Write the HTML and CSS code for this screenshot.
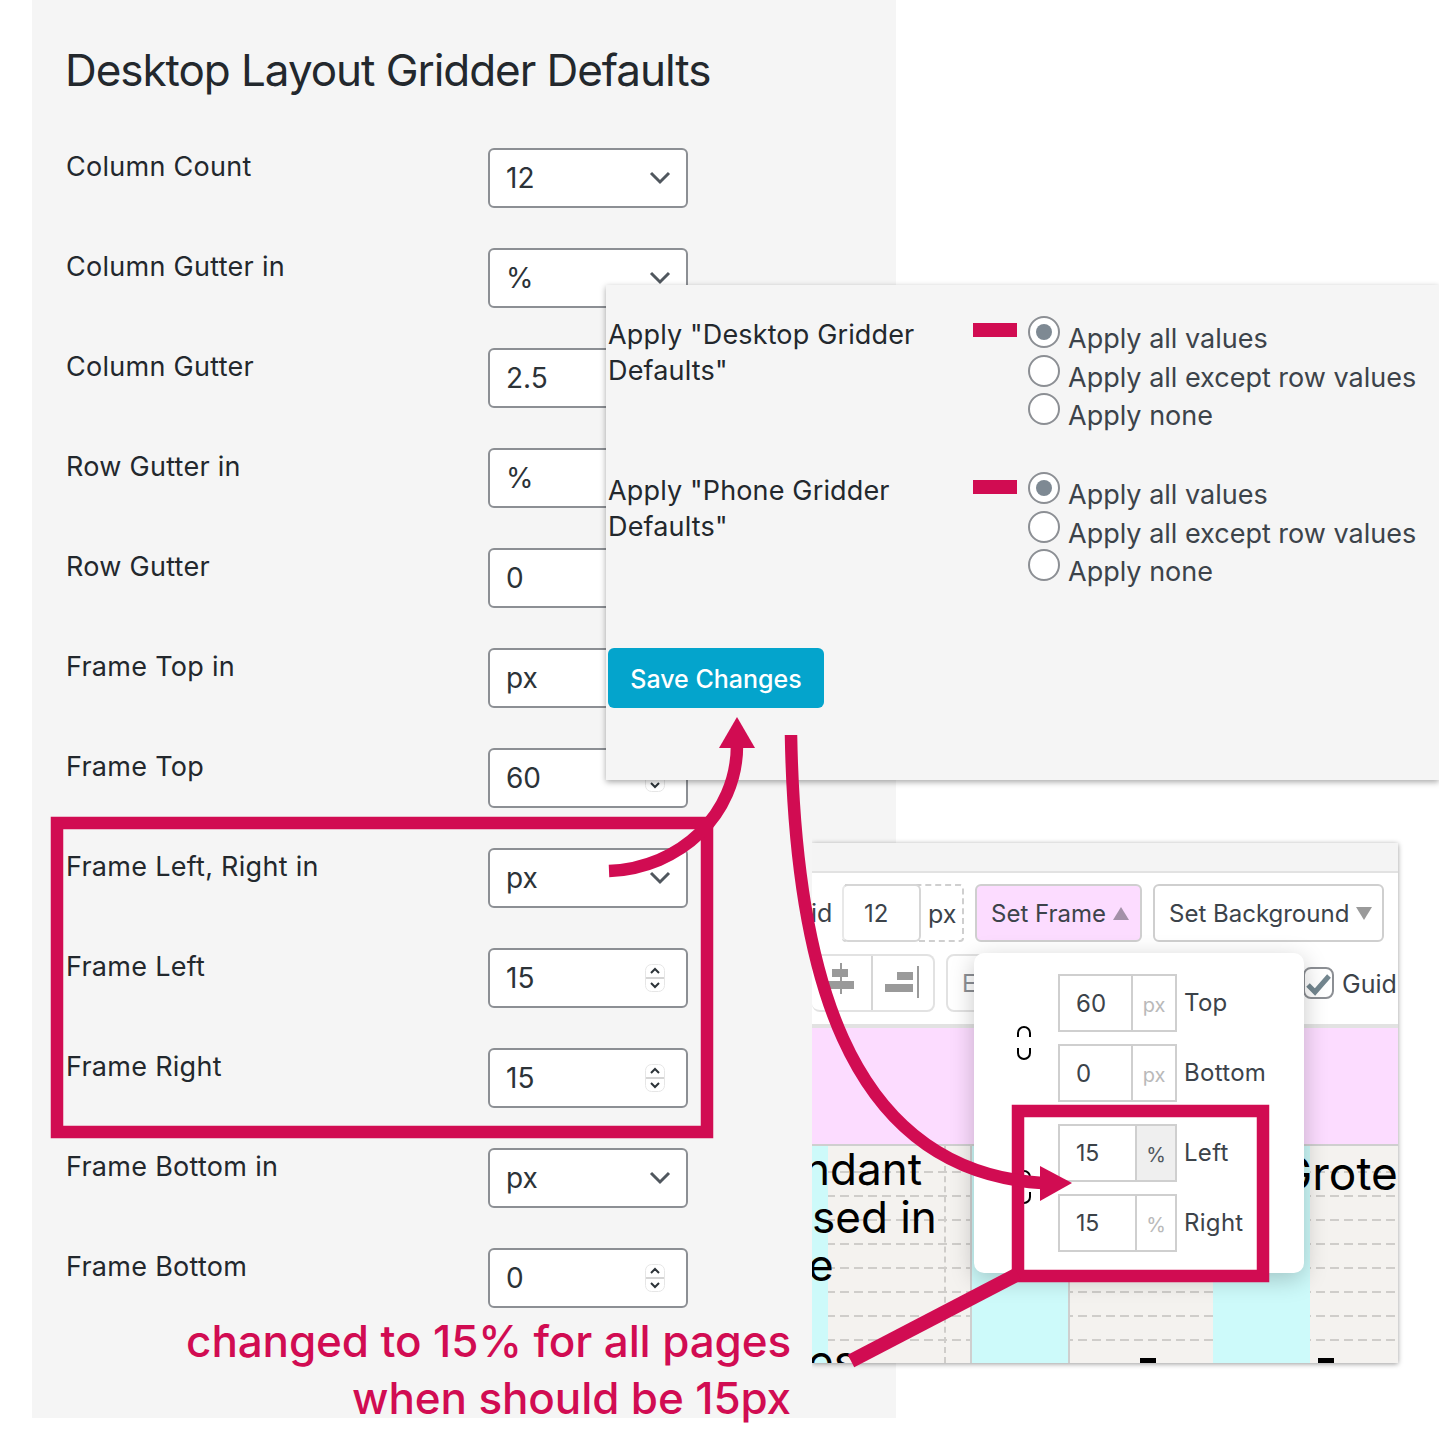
FILE: index.html
```html
<!DOCTYPE html>
<html lang="en">
<head>
<meta charset="utf-8">
<title>Desktop Layout Gridder Defaults</title>
<link rel="stylesheet" href="styles.css">
</head>
<body>
<main class="stage">
  <section class="gridder">
    <h1 class="gridder-title">Desktop Layout Gridder Defaults</h1>
    <div class="row"><span class="row-label">Column Count</span><div class="field"><span>12</span><svg class="chev" viewBox="0 0 22 14"><path d="M2 2l9 9 9-9"/></svg></div></div>
    <div class="row"><span class="row-label">Column Gutter in</span><div class="field"><span>%</span><svg class="chev" viewBox="0 0 22 14"><path d="M2 2l9 9 9-9"/></svg></div></div>
    <div class="row"><span class="row-label">Column Gutter</span><div class="field"><span>2.5</span></div></div>
    <div class="row"><span class="row-label">Row Gutter in</span><div class="field"><span>%</span></div></div>
    <div class="row"><span class="row-label">Row Gutter</span><div class="field"><span>0</span></div></div>
    <div class="row"><span class="row-label">Frame Top in</span><div class="field"><span>px</span></div></div>
    <div class="row"><span class="row-label">Frame Top</span><div class="field"><span>60</span><svg class="spin" viewBox="0 0 20 28"><rect x=".5" y=".5" width="19" height="27" rx="6"/><path class="spin-line" d="M1 14h18"/><path d="M6 9l4-4 4 4M6 19l4 4 4-4"/></svg></div></div>
    <div class="row"><span class="row-label">Frame Left, Right in</span><div class="field"><span>px</span><svg class="chev" viewBox="0 0 22 14"><path d="M2 2l9 9 9-9"/></svg></div></div>
    <div class="row"><span class="row-label">Frame Left</span><div class="field"><span>15</span><svg class="spin" viewBox="0 0 20 28"><rect x=".5" y=".5" width="19" height="27" rx="6"/><path class="spin-line" d="M1 14h18"/><path d="M6 9l4-4 4 4M6 19l4 4 4-4"/></svg></div></div>
    <div class="row"><span class="row-label">Frame Right</span><div class="field"><span>15</span><svg class="spin" viewBox="0 0 20 28"><rect x=".5" y=".5" width="19" height="27" rx="6"/><path class="spin-line" d="M1 14h18"/><path d="M6 9l4-4 4 4M6 19l4 4 4-4"/></svg></div></div>
    <div class="row"><span class="row-label">Frame Bottom in</span><div class="field"><span>px</span><svg class="chev" viewBox="0 0 22 14"><path d="M2 2l9 9 9-9"/></svg></div></div>
    <div class="row"><span class="row-label">Frame Bottom</span><div class="field"><span>0</span><svg class="spin" viewBox="0 0 20 28"><rect x=".5" y=".5" width="19" height="27" rx="6"/><path class="spin-line" d="M1 14h18"/><path d="M6 9l4-4 4 4M6 19l4 4 4-4"/></svg></div></div>
  </section>

  <section class="apply-panel">
    <div class="apply-group">
      <div class="apply-label">Apply "Desktop Gridder Defaults"</div>
      <div class="apply-dash"></div>
      <div class="apply-options">
        <div class="option"><span class="radio radio-on"></span><span class="option-text">Apply all values</span></div>
        <div class="option"><span class="radio"></span><span class="option-text">Apply all except row values</span></div>
        <div class="option"><span class="radio"></span><span class="option-text">Apply none</span></div>
      </div>
    </div>
    <div class="apply-group">
      <div class="apply-label">Apply "Phone Gridder Defaults"</div>
      <div class="apply-dash"></div>
      <div class="apply-options">
        <div class="option"><span class="radio radio-on"></span><span class="option-text">Apply all values</span></div>
        <div class="option"><span class="radio"></span><span class="option-text">Apply all except row values</span></div>
        <div class="option"><span class="radio"></span><span class="option-text">Apply none</span></div>
      </div>
    </div>
    <div class="save-button">Save Changes</div>
  </section>

  <section class="frame-shot">
    <div class="shot-topbar"></div>
    <div class="shot-tools">
      <div class="tool-row">
        <span class="tool-id">id</span>
        <div class="grid-size"><span class="grid-num">12</span><span class="grid-unit">px</span></div>
        <div class="tool-btn tool-btn-on">Set Frame<span class="tri tri-up"></span></div>
        <div class="tool-btn tool-btn-wide">Set Background<span class="tri tri-down"></span></div>
      </div>
      <div class="tool-row tool-row-two">
        <div class="align-group">
          <span class="align-cell align-cell-a"><svg viewBox="0 0 30 32" class="align-icon align-icon-a"><path d="M15 0v31" class="align-axis"/><rect x="6" y="6" width="16" height="8"/><rect x="0" y="18" width="28" height="8"/></svg></span>
          <span class="align-cell"><svg viewBox="0 0 35 34" class="align-icon align-icon-b"><path d="M33 0v32" class="align-axis"/><rect x="12" y="6" width="16" height="8"/><rect x="0" y="18" width="28" height="8"/></svg></span>
        </div>
        <div class="e-button">E</div>
        <div class="guide-toggle"><span class="guide-check"><svg viewBox="0 0 27 28"><path d="M3 16l7 7L24 7"/></svg></span><span>Guid</span></div>
      </div>
    </div>
    <div class="shot-pink"></div>
    <div class="shot-grid">
      <div class="grid-col col-a">
        <span class="col-line col-line-n">ndant</span>
        <span class="col-line">sed in</span>
        <span class="col-line col-line-e">e</span>
        <span class="col-line col-line-blank">&nbsp;</span>
        <span class="col-line col-line-e">es</span>
      </div>
      <div class="grid-col col-b"></div>
      <div class="grid-col col-c"><span class="mark"></span></div>
      <div class="grid-col col-d"></div>
      <div class="grid-col col-e"><span class="grotes">Grotes</span><span class="mark mark-e"></span></div>
    </div>

    <div class="frame-pop">
      <svg class="chain" viewBox="0 0 16 34"><path d="M2 11V7a6 6 0 0 1 12 0v4M2 22v5a6 6 0 0 0 12 0v-5"/></svg>
      <svg class="chain chain-two" viewBox="0 0 16 34"><path d="M2 11V7a6 6 0 0 1 12 0v4M2 22v5a6 6 0 0 0 12 0v-5"/></svg>
      <div class="pop-list">
        <div class="pop-row"><div class="pop-box"><span class="pop-num">60</span><span class="pop-unit">px</span></div><span class="pop-label">Top</span></div>
        <div class="pop-row"><div class="pop-box"><span class="pop-num">0</span><span class="pop-unit">px</span></div><span class="pop-label">Bottom</span></div>
        <div class="pop-row pop-row-gap"><div class="pop-box"><span class="pop-num pop-num-wide">15</span><span class="pop-unit pop-unit-on">%</span></div><span class="pop-label">Left</span></div>
        <div class="pop-row"><div class="pop-box"><span class="pop-num pop-num-wide">15</span><span class="pop-unit pop-unit-small">%</span></div><span class="pop-label">Right</span></div>
      </div>
    </div>
  </section>

  <svg class="marks" viewBox="0 0 1439 1429" aria-hidden="true">
    <rect x="57" y="823" width="650" height="309"/>
    <rect x="1018" y="1111" width="245" height="165"/>
    <path d="M609 871C680 868 737 815 737 745"/>
    <path d="M791 735C795 960 842 1170 1042 1183"/>
    <path class="mark-thick" d="M1018 1274L851 1361"/>
    <polygon points="737,717 719,748 755,748"/>
    <polygon points="1072,1183 1040,1166 1040,1201"/>
  </svg>

  <p class="note">changed to 15% for all pages<br>when should be 15px</p>
</main>
</body>
</html>
```

FILE: styles.css
```css
* { box-sizing: border-box; }
html, body { margin: 0; padding: 0; background: #fff; }
body { font-family: Inter, "Liberation Sans", sans-serif; color: #23282d; }

.stage { position: relative; width: 1439px; height: 1429px; overflow: hidden; }

/* left settings panel */
.gridder {
  width: 864px; height: 1418px; margin-left: 32px;
  padding: 0 0 0 34px; background: #f5f5f5;
}
.gridder-title {
  margin: 0 0 0 -1px; height: 148px; padding-top: 42px;
  font-size: 44px; line-height: 56px; font-weight: 400; letter-spacing: -1.05px;
}
.row { display: grid; grid-template-columns: 422px 200px; height: 60px; margin-bottom: 40px; }
.row-label { padding-top: 1px; font-size: 27px; line-height: 36px; letter-spacing: .28px; }
.field {
  display: flex; align-items: center; justify-content: space-between;
  padding: 0 15px 0 16px; background: #fff;
  border: 2px solid #8c8f94; border-radius: 6px;
  font-size: 28px; color: #2c3338;
}
.chev { width: 22px; height: 14px; fill: none; stroke: #50575e; stroke-width: 3; }
.spin { width: 20px; height: 28px; margin-right: 6px; fill: none; stroke: #2c3338; stroke-width: 2; }
.spin rect { fill: #fff; stroke: #e6e6e6; stroke-width: 1; }
.spin-line { stroke: #d5d5d5; }

/* apply overlay */
.apply-panel {
  position: absolute; left: 606px; top: 285px; width: 833px; height: 495px;
  padding: 31px 0 0 2px; background: #f5f5f5;
  box-shadow: 0 2px 6px rgba(0,0,0,.35);
}
.apply-group { display: flex; height: 156px; }
.apply-label { width: 365px; padding-top: 1px; font-size: 27px; line-height: 36px; letter-spacing: .15px; color: #23282d; }
.apply-dash { width: 44px; height: 14px; margin-top: 7px; background: #d10c52; }
.apply-group + .apply-group .apply-dash { margin-top: 8px; }
.apply-options { margin-left: 11px; }
.option { display: flex; height: 38.5px; }
.option-text { margin: 5px 0 0 8px; font-size: 27px; line-height: 36px; color: #3c434a; white-space: nowrap; }
.radio {
  flex: none; width: 32px; height: 32px; border: 2px solid #8c8f94; border-radius: 50%;
  background: #fff; display: flex; align-items: center; justify-content: center;
}
.radio-on::before { content: ""; width: 16px; height: 16px; border-radius: 50%; background: #7e8993; }
.save-button {
  width: 216px; height: 60px; margin-top: 20px; padding-top: 2px;
  display: flex; align-items: center; justify-content: center;
  background: #04a4cc; color: #fff; border-radius: 6px; font-size: 25px; font-weight: 500;
}

/* frame screenshot */
.frame-shot {
  position: absolute; left: 812px; top: 843px; width: 586px; height: 520px;
  background: #fff; box-shadow: 0 1px 5px rgba(0,0,0,.4); clip-path: inset(-8px -8px -8px 0);
  color: #3c434a;
}
.shot-topbar { height: 30px; background: #f4f4f4; border-bottom: 2px solid #e2e2e2; }
.shot-tools { height: 155px; padding-top: 11px; border-bottom: 4px solid #e2e2e2; overflow: hidden; }
.tool-row { display: flex; align-items: stretch; height: 58px; font-size: 25px; }
.tool-id { width: 20px; margin: 0 11px 0 -1px; padding-top: 14px; line-height: 30px; }
.grid-size {
  display: flex; flex: none; width: 122px; margin-right: 11px;
  border: 2px dashed #cfcfcf; border-left: 0; border-radius: 4px;
}
.grid-num {
  width: 79px; margin: -2px 0; padding-left: 20px; line-height: 56px;
  border: 2px solid #d6d6d6; border-left: 2px solid #e8e8e8; border-radius: 6px; font-size: 24px;
}
.grid-unit { padding-left: 7px; line-height: 56px; }
.tool-btn {
  display: flex; flex: none; align-items: center; gap: 7px; padding: 0 14px;
  border: 2px solid #cfcfcf; border-radius: 6px; margin-right: 11px;
  font-size: 24px; white-space: nowrap;
  background: #fff;
}
.tool-btn-on { width: 167px; background: #fcdcff; }
.tool-btn-wide { width: 231px; }
.tri { flex: none; width: 0; height: 0; border-left: 8px solid transparent; border-right: 8px solid transparent; }
.tri-up { border-bottom: 13px solid #a391a8; }
.tri-down { border-top: 13px solid #9a9a9a; }
.tool-row-two { margin-top: 12px; }
.align-group {
  display: flex; flex: none; width: 123px; height: 58px; margin-right: 11px;
  border: 2px solid #e2e2e2; border-left: 0; border-radius: 8px;
}
.align-cell { width: 61px; display: flex; align-items: center; justify-content: center; }
.align-cell-a { border-right: 2px solid #d6d6d6; }
.align-icon { fill: #9a9a9a; }
.align-icon-a { width: 30px; height: 32px; margin-top: -8px; }
.align-icon-b { width: 35px; height: 34px; }
.align-axis { stroke: #9a9a9a; stroke-width: 2; fill: none; }
.e-button {
  flex: none; width: 60px; height: 58px; padding-left: 14px; line-height: 56px; font-size: 24px; color: #8c8f94;
  border: 2px solid #e2e2e2; border-radius: 8px;
}
.guide-toggle { display: flex; align-items: center; gap: 8px; margin-left: 297px; padding-top: 2px; font-size: 25px; white-space: nowrap; }
.guide-check {
  width: 31px; height: 32px; flex: none; margin-top: -2px; border: 2px solid #8c8f94; border-radius: 8px;
}
.guide-check svg { display: block; width: 27px; height: 28px; fill: none; stroke: #73868f; stroke-width: 5; }
.shot-pink { height: 118px; background: #fcdcff; border-bottom: 2px solid #cfcfcf; }
.shot-grid {
  position: relative; display: flex; height: 217px; overflow: hidden; background-color: #f4f2ef;
  background-image:
    repeating-linear-gradient(90deg, transparent 0 9px, #f4f2ef 9px 14px),
    repeating-linear-gradient(180deg, transparent 0 22px, #cfcdca 22px 24px);
  background-position: 0 0, 0 3px;
}
.shot-grid::before { content: ""; position: absolute; left: 0; right: 0; top: 0; height: 6px; background: #f4f2ef; }
.grid-col { position: relative; height: 100%; color: #000; }
.col-a { width: 160px; border-right: 2px solid #cfcfcf; overflow: hidden;
  background: linear-gradient(90deg, #cdfafa 0 16px, transparent 16px); }
.col-a::after { content: ""; position: absolute; left: 132px; top: 0; bottom: 0; border-left: 2px dashed #cfcdca; }
.col-line { position: relative; z-index: 1; display: block; top: -1px; margin-left: 0; font-size: 44px; line-height: 48px; white-space: nowrap; }
.col-line-n { margin-left: -8px; }
.col-line-e { margin-left: -4px; }
.col-b { width: 98px; background: #cdfafa; border-right: 2px solid #cfcfcf; }
.col-c { width: 143px; }
.col-d { width: 97px; background: #cdfafa; }
.col-e { flex: 1; }
.grotes { position: absolute; left: -32px; top: 3px; font-size: 46px; line-height: 48px; white-space: nowrap; }
.mark { position: absolute; left: 70px; bottom: 0; width: 16px; height: 5px; background: #000; }
.mark-e { left: 8px; }

.frame-pop {
  position: absolute; left: 162px; top: 110px; width: 330px; height: 320px;
  padding: 21px 0 0 85px; background: #fff; border-radius: 10px;
  box-shadow: 0 6px 24px rgba(0,0,0,.22);
}
.pop-row { display: flex; margin-bottom: 12px; }
.pop-row-gap { margin-top: 22px; }
.pop-box { display: flex; width: 119px; height: 58px; margin-left: -1px; border: 2px solid #cfcfcf; font-size: 24px; color: #3c434a; }
.pop-num { width: 73px; padding-left: 16px; line-height: 55px; border-right: 2px solid #cfcfcf; }
.pop-num-wide { width: 77px; font-size: 23px; }
.pop-unit { flex: 1; text-align: center; color: #b9b9b9; font-size: 20px; line-height: 58px; }
.pop-unit-on { background: #efefef; color: #50575e; }
.pop-unit-small { font-size: 20px; }
.pop-label { margin-left: 7px; font-size: 24px; line-height: 58px; letter-spacing: .3px; }
.chain { position: absolute; left: 42px; top: 73px; width: 16px; height: 34px; fill: none; stroke: #000; stroke-width: 2; }
.chain-two { top: 217px; }

/* annotations */
.marks { position: absolute; inset: 0; width: 1439px; height: 1429px; fill: none; stroke: #d10c52; stroke-width: 12.5; pointer-events: none; }
.marks polygon { fill: #d10c52; stroke: none; }
.mark-thick { stroke-width: 14; }
.note {
  position: absolute; right: 648px; top: 1313px; margin: 0; text-align: right;
  color: #d10c52; font-size: 44px; line-height: 57px; font-weight: 500; letter-spacing: -.12px; white-space: nowrap;
}
```
